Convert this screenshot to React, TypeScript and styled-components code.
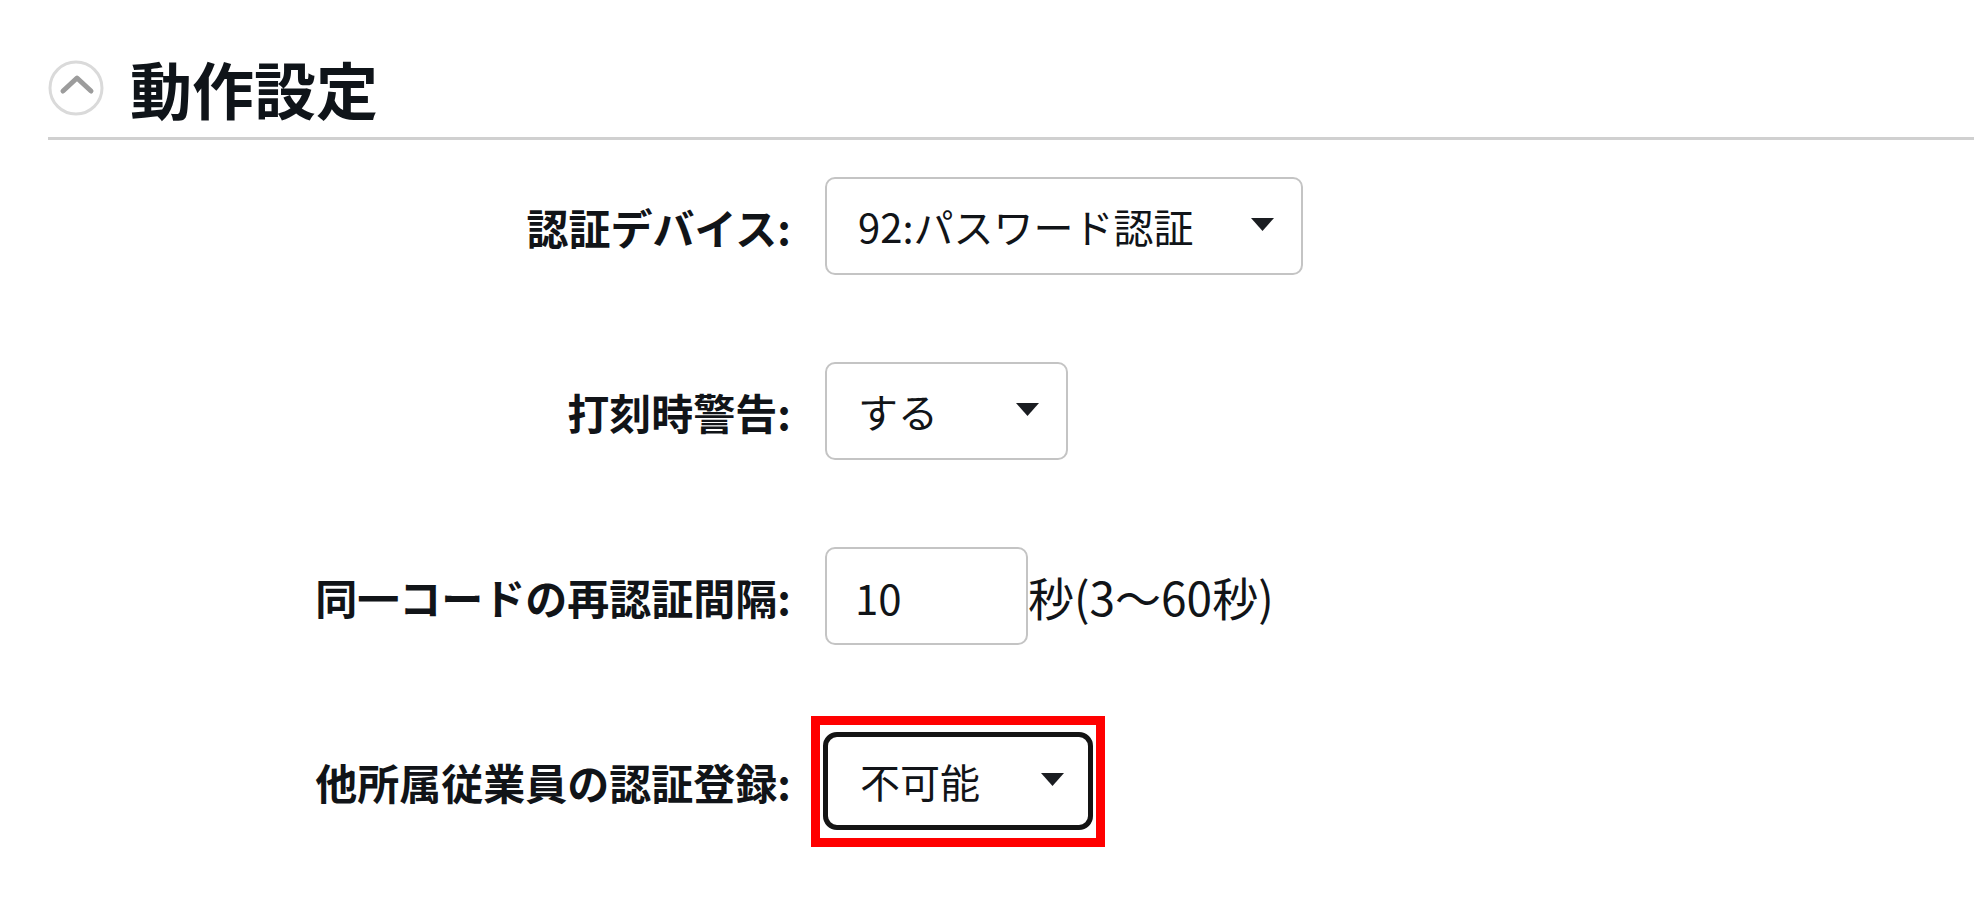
import styled, { createGlobalStyle } from 'styled-components';

/* ── Global ── */

const GlobalStyle = createGlobalStyle`
    html, body {
        margin: 0;
        padding: 0;
        background: #ffffff;
    }
    body {
        font-family: "Noto Sans CJK JP", "Noto Sans", sans-serif;
        color: #111418;
    }
`;

/* ── Styles ── */

const Page = styled.div`
    width: 1974px;
    min-height: 909px;
`;

const Header = styled.div`
    display: flex;
    align-items: center;
    gap: 26px;
    margin-left: 48px;
    padding: 57px 0 18px;
    border-bottom: 3px solid #d0d0d0;
`;

const ToggleIcon = styled.button`
    width: 56px;
    height: 56px;
    padding: 0;
    border: none;
    background: none;
    flex-shrink: 0;
    display: flex;
    cursor: pointer;
`;

const Title = styled.h2`
    margin: 0;
    font-size: 62px;
    line-height: 62px;
    font-weight: 700;
    color: #0f1419;
`;

const Form = styled.div`
    display: grid;
    grid-template-columns: 743px max-content;
    column-gap: 34px;
    row-gap: 87px;
    align-items: center;
    margin: 37px 0 0 48px;
`;

const Label = styled.label`
    justify-self: end;
    font-size: 42px;
    font-weight: 700;
    color: #111418;
    white-space: nowrap;
`;

const Field = styled.div`
    display: flex;
    align-items: center;
`;

const SelectWrap = styled.div<{ $highlight?: boolean }>`
    position: relative;
    display: inline-flex;

    ${p => p.$highlight && `
        margin-left: -2px;
        &::after {
            content: '';
            position: absolute;
            inset: -16px -12px -17px -12px;
            border: 9px solid #ff0000;
            pointer-events: none;
        }
    `}
`;

const Select = styled.select<{ $width: number; $active?: boolean }>`
    appearance: none;
    -webkit-appearance: none;
    box-sizing: border-box;
    width: ${p => p.$width}px;
    height: 98px;
    padding: 0 60px 0 ${p => (p.$active ? 32 : 31)}px;
    font-family: "Noto Sans CJK JP", "Noto Sans", sans-serif;
    font-size: 40px;
    color: #111418;
    background: #ffffff;
    border: ${p => (p.$active ? '5px solid #141414' : '2px solid #c4c4c4')};
    border-radius: ${p => (p.$active ? 14 : 10)}px;
    outline: none;
`;

const Arrow = styled.svg`
    position: absolute;
    right: 28px;
    top: 50%;
    margin-top: -9px;
    pointer-events: none;
`;

const NumberInput = styled.input`
    box-sizing: border-box;
    width: 203px;
    height: 98px;
    padding: 0 0 0 28px;
    font-family: "Noto Sans CJK JP", "Noto Sans", sans-serif;
    font-size: 42px;
    color: #111418;
    background: #ffffff;
    border: 2px solid #c4c4c4;
    border-radius: 10px;
    outline: none;
`;

const Suffix = styled.span`
    font-size: 46px;
    color: #111418;
    white-space: nowrap;
`;

/* ── Parts ── */

const Dropdown = ({ value, options, width, highlight }: {
    value: string;
    options: string[];
    width: number;
    highlight?: boolean;
}) => (
    <SelectWrap $highlight={highlight}>
        <Select $width={width} $active={highlight} defaultValue={value}>
            {options.map(o => <option key={o} value={o}>{o}</option>)}
        </Select>
        <Arrow width="25" height="15" viewBox="0 0 25 15">
            <path d="M1 1 L24 1 L12.5 14 Z" fill="#1a1d21" />
        </Arrow>
    </SelectWrap>
);

/* ── Component ── */

export default function App() {
    return (
        <Page>
            <GlobalStyle />
            <Header>
                <ToggleIcon aria-label="折りたたむ">
                    <svg width="56" height="56" viewBox="0 0 56 56">
                        <circle cx="28" cy="28" r="26" fill="#ffffff" stroke="#dadada" strokeWidth="3" />
                        <polyline
                            points="15,31 29,18 43,31"
                            fill="none"
                            stroke="#9c9c9c"
                            strokeWidth="5"
                            strokeLinecap="round"
                            strokeLinejoin="round"
                        />
                    </svg>
                </ToggleIcon>
                <Title>動作設定</Title>
            </Header>

            <Form>
                <Label>認証デバイス:</Label>
                <Field>
                    <Dropdown value="92:パスワード認証" options={['92:パスワード認証']} width={478} />
                </Field>

                <Label>打刻時警告:</Label>
                <Field>
                    <Dropdown value="する" options={['する', 'しない']} width={243} />
                </Field>

                <Label>同一コードの再認証間隔:</Label>
                <Field>
                    <NumberInput type="text" defaultValue="10" />
                    <Suffix>秒(3～60秒)</Suffix>
                </Field>

                <Label>他所属従業員の認証登録:</Label>
                <Field>
                    <Dropdown value="不可能" options={['不可能', '可能']} width={270} highlight />
                </Field>
            </Form>
        </Page>
    );
}
